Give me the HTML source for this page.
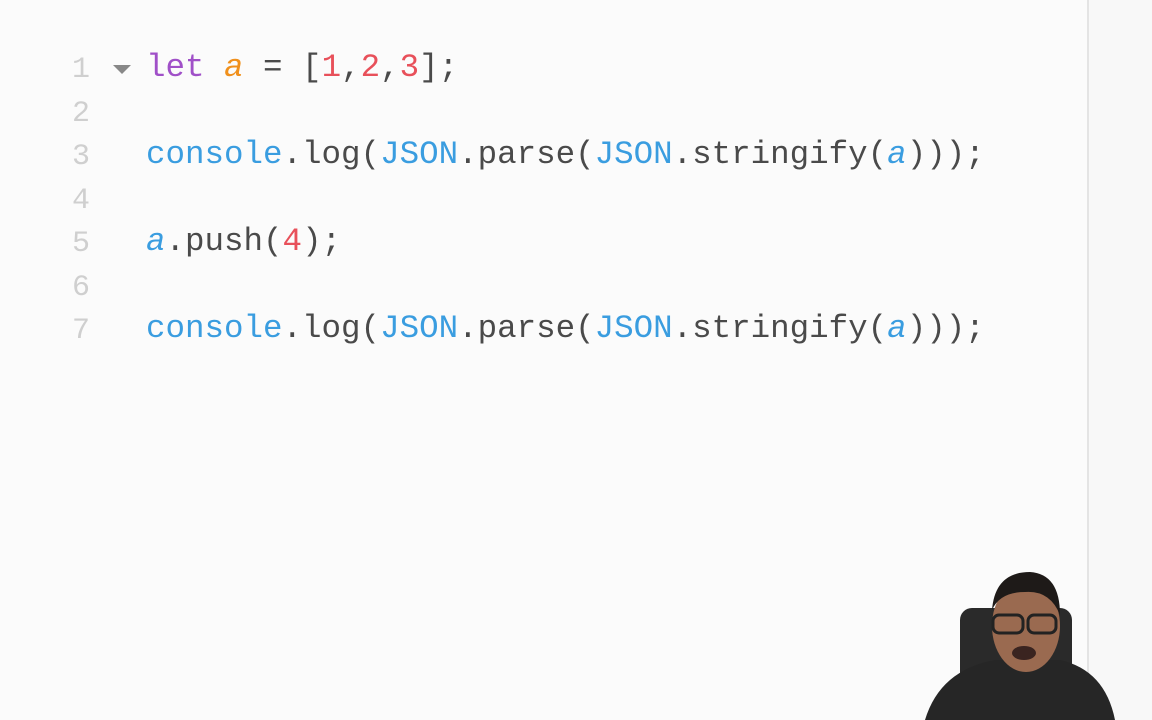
<!DOCTYPE html>
<html><head><style>
html,body{margin:0;padding:0}
body{width:1152px;height:720px;background:#f8f8f8;position:relative;overflow:hidden;font-family:"Liberation Mono",monospace}
.ed{position:absolute;left:0;top:0;width:1087px;height:720px;background:#fbfbfb;border-right:2px solid #e4e4e4}
.ln{position:absolute;left:64px;width:26px;text-align:right;color:#cfcfcf;font-size:30px}
.code{position:absolute;left:146px;font-size:32.5px;color:#4a4a4a;white-space:pre;line-height:40px}
.k{color:#a050c8}.v{color:#f0901c;font-style:italic}.n{color:#e8505a}.b{color:#3a9de0}.a{color:#3a9de0;font-style:italic}
.tri{position:absolute;left:113px;top:65px;width:0;height:0;border-left:9px solid transparent;border-right:9px solid transparent;border-top:9px solid #888}
</style></head><body>
<div class="ed"></div>
<div class="ln" style="top:53px">1</div>
<div class="ln" style="top:97px">2</div>
<div class="ln" style="top:140px">3</div>
<div class="ln" style="top:184px">4</div>
<div class="ln" style="top:227px">5</div>
<div class="ln" style="top:271px">6</div>
<div class="ln" style="top:314px">7</div>
<div class="tri"></div>
<div class="code" style="top:48px"><span class="k">let</span> <span class="v">a</span> = [<span class="n">1</span>,<span class="n">2</span>,<span class="n">3</span>];</div>
<div class="code" style="top:135px"><span class="b">console</span>.log(<span class="b">JSON</span>.parse(<span class="b">JSON</span>.stringify(<span class="a">a</span>)));</div>
<div class="code" style="top:222px"><span class="a">a</span>.push(<span class="n">4</span>);</div>
<div class="code" style="top:309px"><span class="b">console</span>.log(<span class="b">JSON</span>.parse(<span class="b">JSON</span>.stringify(<span class="a">a</span>)));</div>
<svg style="position:absolute;left:900px;top:560px" width="252" height="160">
<rect x="60" y="48" width="112" height="80" rx="12" fill="#2a2a2a"/>
<path d="M25 160 Q40 110 95 100 L160 100 Q205 110 215 160Z" fill="#262626"/>
<ellipse cx="126" cy="66" rx="34" ry="46" fill="#9a6a50"/>
<path d="M92 50 Q95 12 130 12 Q160 14 160 55 Q150 30 125 32 Q100 32 92 50Z" fill="#1e1a18"/>
<rect x="93" y="55" width="30" height="18" rx="6" fill="none" stroke="#222" stroke-width="3"/>
<rect x="128" y="55" width="28" height="18" rx="6" fill="none" stroke="#222" stroke-width="3"/>
<ellipse cx="124" cy="93" rx="12" ry="7" fill="#3a2420"/>
</svg>
</body></html>
